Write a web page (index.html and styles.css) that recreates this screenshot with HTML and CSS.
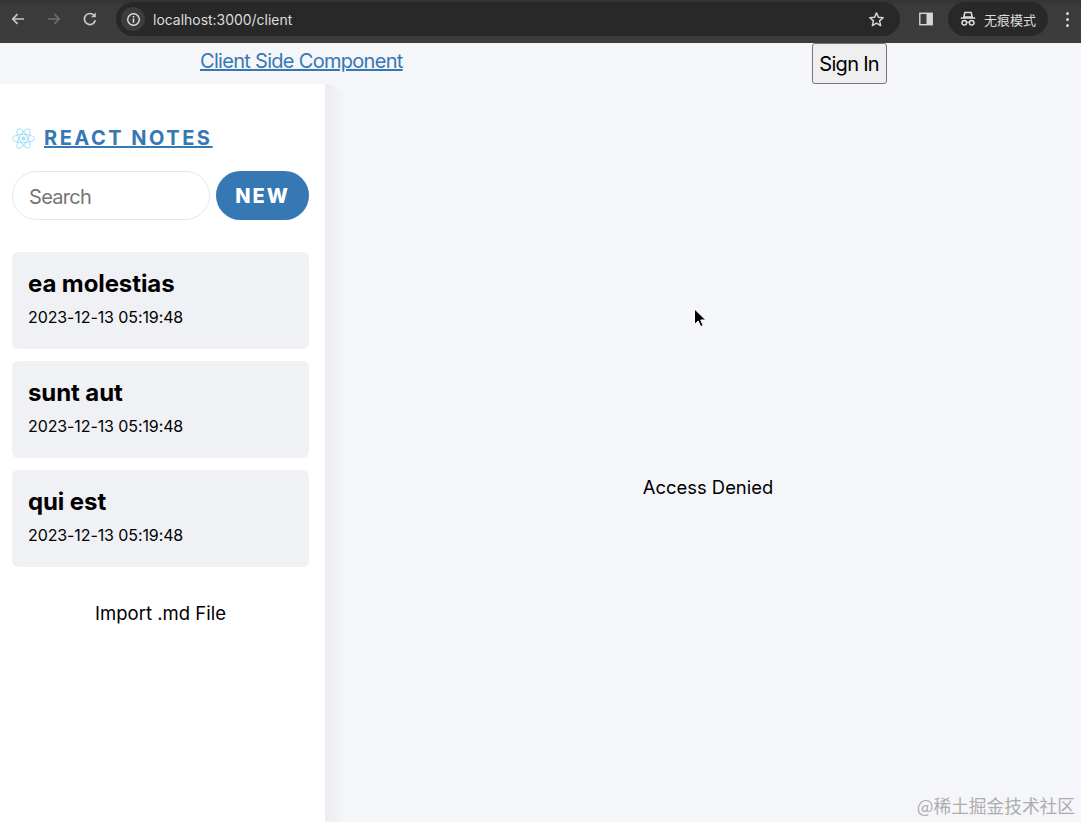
FILE: index.html
```html
<!DOCTYPE html>
<html lang="en">
<head>
<meta charset="utf-8">
<title>React Notes</title>
<link rel="stylesheet" href="styles.css">
</head>
<body>
<div class="page">
  <div class="chrome">
    <div class="nav">
      <svg class="ico" viewBox="0 0 16 16"><path d="M14 8H3M7.500 3.200 2.800 8l4.700 4.800" fill="none" stroke="#c8c8c8" stroke-width="1.700"/></svg>
      <svg class="ico" viewBox="0 0 16 16"><path d="M2 8h11M8.500 3.200 13.200 8l-4.700 4.800" fill="none" stroke="#6f6f6f" stroke-width="1.700"/></svg>
      <svg class="ico" viewBox="0 0 16 16"><path d="M13.300 9.200A5.500 5.500 0 1 1 12 4.300" fill="none" stroke="#c8c8c8" stroke-width="1.700"/><path d="M13.800 1.500v4.800H9z" fill="#c8c8c8"/></svg>
    </div>
    <div class="omnibox">
      <span class="info">
        <svg viewBox="0 0 16 16" class="info-ico"><circle cx="8" cy="8" r="6.200" fill="none" stroke="#e2e2e2" stroke-width="1.500"/><path d="M8 7v4.500M8 4.300v1.500" stroke="#e2e2e2" stroke-width="1.600"/></svg>
      </span>
      <span class="url">localhost:3000/client</span>
      <svg class="star" viewBox="0 0 16 16"><path d="m8 1.800 1.800 4.100 4.500.4-3.400 3 1 4.400L8 11.400l-3.900 2.300 1-4.400-3.400-3 4.500-.4z" fill="none" stroke="#d6d6d6" stroke-width="1.400" stroke-linejoin="round"/></svg>
    </div>
    <svg class="panel" viewBox="0 0 14 14"><rect x=".8" y="1.300" width="12.400" height="11.400" fill="none" stroke="#d6d6d6" stroke-width="1.400"/><rect x="7.500" y="1.300" width="5.700" height="11.400" fill="#d6d6d6"/></svg>
    <div class="chip">
      <svg class="spy" viewBox="0 0 16 16"><path d="M4.800 1.500h6.400l1 4.500H3.800zM.8 7h14.400" fill="none" stroke="#dcdcdc" stroke-width="1.500"/><circle cx="4.300" cy="11.700" r="2.300" fill="none" stroke="#dcdcdc" stroke-width="1.500"/><circle cx="11.700" cy="11.700" r="2.300" fill="none" stroke="#dcdcdc" stroke-width="1.500"/><path d="M6.500 11.300h3" stroke="#dcdcdc" stroke-width="1.200"/></svg>
      <span class="chip-label">无痕模式</span>
    </div>
    <div class="dots"><i></i><i></i><i></i></div>
  </div>
  <header class="topbar">
    <a class="client-link" href="#">Client Side Component</a>
    <button class="signin" type="button">Sign In</button>
  </header>
  <main class="main">
    <aside class="sidebar">
      <a class="brand" href="#">
        <svg class="logo" viewBox="-11.500 -10.232 23 20.463"><circle r="2.050" fill="#9fdff8"/><g fill="none" stroke="#9fdff8" stroke-width="1"><ellipse rx="11" ry="4.200"/><ellipse rx="11" ry="4.200" transform="rotate(60)"/><ellipse rx="11" ry="4.200" transform="rotate(120)"/></g></svg>
        <strong class="brand-text">REACT NOTES</strong>
      </a>
      <div class="menu">
        <input class="search" type="text" placeholder="Search">
        <button class="new" type="button">NEW</button>
      </div>
      <ul class="notes">
        <li class="note"><h2 class="note-title">ea molestias</h2><small class="note-date">2023-12-13 05:19:48</small></li>
        <li class="note"><h2 class="note-title">sunt aut</h2><small class="note-date">2023-12-13 05:19:48</small></li>
        <li class="note"><h2 class="note-title">qui est</h2><small class="note-date">2023-12-13 05:19:48</small></li>
      </ul>
      <div class="import">Import .md File</div>
    </aside>
    <section class="viewer"><span class="denied">Access Denied</span></section>
  </main>
  <svg class="cursor" viewBox="0 0 13 20"><path d="M1.500 1v15.500l3.700-3.500 2.500 5.600 2.500-1.100-2.500-5.500h5z" fill="#000" stroke="#fff" stroke-width="1"/></svg>
  <div class="watermark">@稀土掘金技术社区</div>
</div>
</body>
</html>
```
FILE: styles.css
```css
* { box-sizing: border-box; }
html, body { margin: 0; height: 100%; }
body { font-family: Inter, "Noto Sans CJK SC", sans-serif; color: #000; background: #f5f6fa; overflow: hidden; }
.page { position: relative; width: 1081px; height: 822px; display: flex; flex-direction: column; }

.chrome { height: 43px; flex: none; display: flex; align-items: flex-start; padding-top: 2px; background: linear-gradient(#333 0, #3b3b3b 6px, #3c3c3c 100%); }
.nav { display: flex; gap: 20px; padding: 9px 0 0 10px; width: 116px; }
.ico { width: 16px; height: 16px; display: block; }
.omnibox { width: 784px; height: 34px; border-radius: 17px; background: #282828; display: flex; align-items: center; padding: 0 15px 0 5px; }
.info { width: 24px; height: 24px; border-radius: 50%; background: #3c3c3c; display: flex; align-items: center; justify-content: center; }
.info-ico { width: 15px; height: 15px; }
.url { margin-left: 8px; font: 13.950px Inter, sans-serif; color: #dcdcdc; flex: 1; }
.star { width: 17px; height: 17px; }
.panel { width: 14px; height: 14px; margin: 10px 0 0 19px; }
.chip { width: 100px; height: 34px; margin-left: 15px; border-radius: 17px; background: #282828; display: flex; align-items: center; padding-left: 12px; gap: 8px; }
.spy { width: 16px; height: 16px; }
.chip-label { font: 13px "Noto Sans CJK SC", sans-serif; color: #dcdcdc; }
.dots { margin: 10px 0 0 18px; display: flex; flex-direction: column; gap: 3px; }
.dots i { width: 3px; height: 3px; border-radius: 50%; background: #d6d6d6; display: block; }

.topbar { height: 41px; flex: none; display: flex; align-items: flex-start; padding-left: 200px; background: #f5f6fa; }
.client-link { font-size: 20px; letter-spacing: -.7px; line-height: 36px; color: #3578b3; }
.signin { margin-left: 409px; width: 75px; height: 41px; padding: 0; font: 20px Inter, sans-serif; letter-spacing: -.7px; color: #000; background: #efefef; border: 1px solid #767676; border-radius: 3px; }

.main { flex: 1; display: flex; min-height: 0; }
.sidebar { width: 325px; flex: none; padding: 42px 16px 0 12px; background: #fff; display: flex; flex-direction: column; position: relative; }
.sidebar::after { content: ""; position: absolute; left: 100%; top: 0; bottom: 0; width: 18px; border-top-right-radius: 18px; background: linear-gradient(90deg, #edeef1, #f0f1f5 60%, #f3f4f8); }
.brand { display: flex; align-items: center; gap: 9px; color: #3578b3; height: 24px; }
.logo { width: 23px; height: 21px; }
.brand-text { font-size: 20px; font-weight: 700; letter-spacing: 2.500px; text-decoration: underline; }
.menu { display: flex; gap: 6px; margin-top: 21px; }
.search { width: 198px; height: 49px; border: 1px solid #e5e7eb; border-radius: 25px; padding: 2px 16px 0; font: 20px Inter, sans-serif; letter-spacing: -.7px; color: #000; background: #fff; outline: none; }
.search::placeholder { color: #757575; opacity: 1; }
.new { width: 93px; height: 49px; border: 0; border-radius: 25px; background: #3578b3; color: #fff; font: 800 20px Inter, sans-serif; letter-spacing: 2px; padding: 0; }
.notes { list-style: none; margin: 32px 0 0; padding: 0; display: flex; flex-direction: column; gap: 12px; }
.note { height: 97px; border-radius: 6px; background: #f0f1f5; padding: 17px 16px 0; display: flex; flex-direction: column; }
.note-title { margin: 0; font-size: 24px; line-height: 30px; font-weight: 700; letter-spacing: -.1px; }
.note-date { margin-top: 8px; font-size: 16px; letter-spacing: -.1px; line-height: 20px; }
.import { margin-top: 34px; text-align: center; font-size: 18.500px; line-height: 24px; }
.viewer { flex: 1; display: flex; align-items: center; justify-content: center; padding: 67px 0 0 10px; background: #f5f6fa; }
.denied { font-size: 18.400px; line-height: 24px; }

.cursor { position: absolute; left: 693px; top: 308px; width: 13px; height: 20px; }
.watermark { position: absolute; right: 6px; bottom: 4px; font: 17.700px "Noto Sans CJK SC", sans-serif; color: #adadad; white-space: nowrap; }
```
